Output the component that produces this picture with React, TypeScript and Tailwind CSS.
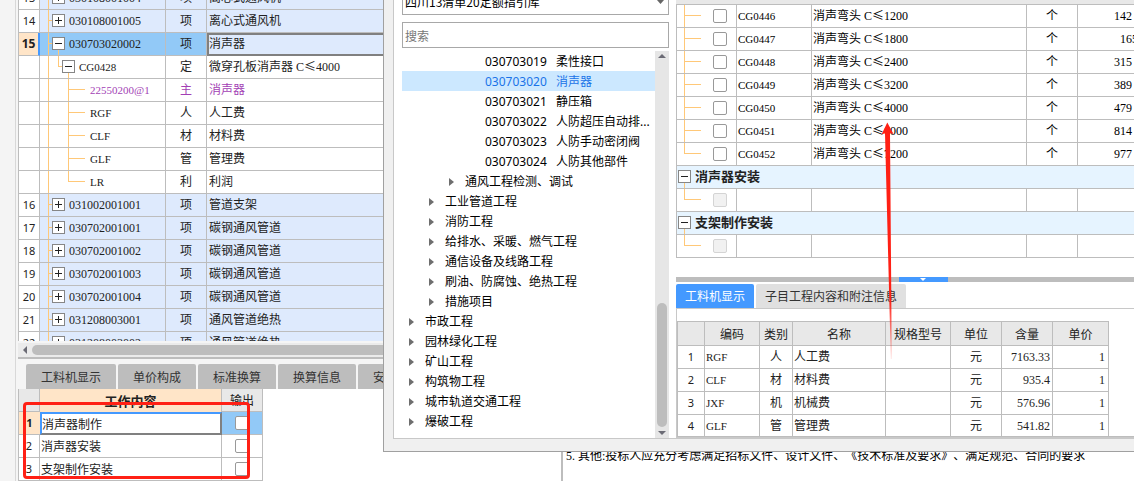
import React from "react";

/* Latin runs use a narrow serif so that digits take half the width of a Chinese character. */
function Txt({ children }: { children: string }) {
  const parts = children.split(/([\x20-\x7e]+)/).filter(Boolean);
  return (
    <>
      {parts.map((p, i) =>
        /^[\x20-\x7e]/.test(p) ? (
          <span
            key={i}
            className={
              /^[A-Z0-9@]*[A-Z@][A-Z0-9@]*$/.test(p) && p.length > 1
                ? "whitespace-pre font-['Liberation_Serif',serif] text-[11px]"
                : "whitespace-pre font-['Liberation_Serif',serif] text-[12px]"
            }
          >
            {p}
          </span>
        ) : (
          <span key={i}>{p}</span>
        )
      )}
    </>
  );
}

function Toggle({ open, stem, label }: { open: boolean; stem?: boolean; label: string }) {
  return (
    <button type="button" aria-label={label} aria-expanded={open} className="mt-1 block shrink-0">
      <svg width="13" height="18" className="block" shapeRendering="crispEdges">
        {stem && <path d="M6.5 13V18" stroke="#ffc878" />}
        <rect x="0.5" y="0.5" width="12" height="12" fill="#fff" stroke="#868686" />
        <path d={open ? "M3 6.5H10" : "M3 6.5H10M6.5 3V10"} stroke="#222" />
      </svg>
    </button>
  );
}

function Guide({ width, d }: { width: number; d: string }) {
  return (
    <svg width={width} height="22" className="block shrink-0" shapeRendering="crispEdges" aria-hidden="true">
      <path d={d} stroke="#ffc878" fill="none" />
    </svg>
  );
}

type Bill = { no: string; code: string; cat: string; name: string; level: number; open?: boolean; last?: boolean };

const bills: Bill[] = [
  { no: "13", code: "030108001004", cat: "项", name: "离心式通风机", level: 0 },
  { no: "14", code: "030108001005", cat: "项", name: "离心式通风机", level: 0 },
  { no: "15", code: "030703020002", cat: "项", name: "消声器", level: 0, open: true },
  { no: "", code: "CG0428", cat: "定", name: "微穿孔板消声器 C≤4000", level: 1, open: true },
  { no: "", code: "22550200@1", cat: "主", name: "消声器", level: 2 },
  { no: "", code: "RGF", cat: "人", name: "人工费", level: 2 },
  { no: "", code: "CLF", cat: "材", name: "材料费", level: 2 },
  { no: "", code: "GLF", cat: "管", name: "管理费", level: 2 },
  { no: "", code: "LR", cat: "利", name: "利润", level: 2, last: true },
  { no: "16", code: "031002001001", cat: "项", name: "管道支架", level: 0 },
  { no: "17", code: "030702001001", cat: "项", name: "碳钢通风管道", level: 0 },
  { no: "18", code: "030702001002", cat: "项", name: "碳钢通风管道", level: 0 },
  { no: "19", code: "030702001003", cat: "项", name: "碳钢通风管道", level: 0 },
  { no: "20", code: "030702001004", cat: "项", name: "碳钢通风管道", level: 0 },
  { no: "21", code: "031208003001", cat: "项", name: "通风管道绝热", level: 0 },
  { no: "22", code: "031208003002", cat: "项", name: "通风管道绝热", level: 0 },
];

function BillTable() {
  return (
    <table className="-mt-[13px] w-full table-fixed border-separate border-spacing-0 text-[#222]">
      <colgroup>
        <col className="w-[21px]" />
        <col className="w-[126px]" />
        <col className="w-[41px]" />
        <col />
      </colgroup>
      <tbody>
        {bills.map((b) => {
          const sel = b.no === "15";
          const bg = sel ? "bg-[#92c9f7]" : b.level === 0 ? "bg-[#deeafd]" : "bg-white";
          const color = b.code.includes("@") ? "text-[#a33fb5]" : "";
          const cell = `h-[23px] border-b border-r border-[#bdbdbd] p-0 ${bg} ${color}`;
          return (
            <tr key={b.code}>
              <th
                scope="row"
                className={
                  sel
                    ? "h-[23px] border-b border-r-2 border-b-[#bdbdbd] border-r-[#4499ff] bg-[#ffe5c8] p-0 font-['Noto_Sans',sans-serif] text-[12px] font-bold leading-[22px]"
                    : "h-[23px] border-b border-r border-[#bdbdbd] bg-white p-0 font-['Noto_Sans',sans-serif] text-[11px] font-normal leading-[22px]"
                }
              >
                {b.no}
              </th>
              <td className={cell}>
                <div className="flex h-[22px] items-start">
                  {b.level === 0 && <Guide width={12} d="M8.5 0V22M8 10.5H12" />}
                  {b.level === 1 && <Guide width={22} d="M8.5 0V22M18.5 0V10.5H22" />}
                  {b.level === 2 && (
                    <Guide width={50} d={b.last ? "M8.5 0V22M28.5 0V10.5H45" : "M8.5 0V22M28.5 0V22M28 10.5H45"} />
                  )}
                  {b.level < 2 && <Toggle open={!!b.open} stem={b.open} label={b.code} />}
                  <span className={b.level < 2 ? "pl-1 leading-5" : "leading-5"}>
                    <Txt>{b.code}</Txt>
                  </span>
                </div>
              </td>
              <td className={`${cell} text-center`}>
                <div className="h-[22px] leading-5">{b.cat}</div>
              </td>
              {sel ? (
                <td className="h-[23px] border-2 border-[#808080] bg-[#deeafd] p-0">
                  <div className="h-[19px] leading-4">{b.name}</div>
                </td>
              ) : (
                <td className={cell}>
                  <div className="h-[22px] pl-0.5 leading-5">
                    <Txt>{b.name}</Txt>
                  </div>
                </td>
              )}
            </tr>
          );
        })}
      </tbody>
    </table>
  );
}

const box =
  "block size-3.5 appearance-none rounded-[2px] border border-[#999] bg-white disabled:border-[#d4d4d4] disabled:bg-[#f1f1f1]";

const works = ["消声器制作", "消声器安装", "支架制作安装"];

function WorkTable() {
  return (
    <table className="w-[245px] table-fixed border-separate border-spacing-0 border-l border-[#bdbdbd] text-[#222]">
      <colgroup>
        <col className="w-[21px]" />
        <col className="w-[182px]" />
        <col />
      </colgroup>
      <thead>
        <tr>
          <td className="h-[23px] border-b border-r border-[#bdbdbd] bg-[#e8e8e8] p-0" />
          <th className="h-[23px] border-r border-[#bdbdbd] bg-[#ffe5c8] p-0 text-[13px] font-bold leading-5">
            工作内容
          </th>
          <th className="h-[23px] border-b border-r border-[#bdbdbd] bg-[#e8e8e8] p-0 font-normal leading-5">输出</th>
        </tr>
      </thead>
      <tbody>
        {works.map((w, i) => (
          <tr key={w}>
            <th
              scope="row"
              className={
                i === 0
                  ? "h-[23px] border-b border-[#bdbdbd] bg-[#ffe5c8] p-0 font-['Noto_Sans',sans-serif] text-[11px] font-bold"
                  : "h-[23px] border-b border-r border-[#bdbdbd] bg-white p-0 font-['Noto_Sans',sans-serif] text-[11px] font-normal"
              }
            >
              {i + 1}
            </th>
            <td
              className={
                i === 0
                  ? "h-[23px] border-2 border-b-[#808080] border-l-[#4499ff] border-r-[#808080] border-t-[#4499ff] bg-white p-0 leading-[18px]"
                  : "h-[23px] border-b border-r border-[#bdbdbd] bg-white p-0 pl-px leading-5"
              }
            >
              {w}
            </td>
            <td
              className={
                i === 0
                  ? "h-[23px] border-b border-r border-[#bdbdbd] bg-[#92c9f7] p-0"
                  : "h-[23px] border-b border-r border-[#bdbdbd] bg-white p-0"
              }
            >
              <input type="checkbox" aria-label={`输出 ${w}`} className={`${box} mx-auto`} />
            </td>
          </tr>
        ))}
      </tbody>
    </table>
  );
}

type Node = { text: string; code?: string; level: number };

const nodes: Node[] = [
  { code: "030703019", text: "柔性接口", level: 3 },
  { code: "030703020", text: "消声器", level: 3 },
  { code: "030703021", text: "静压箱", level: 3 },
  { code: "030703022", text: "人防超压自动排...", level: 3 },
  { code: "030703023", text: "人防手动密闭阀", level: 3 },
  { code: "030703024", text: "人防其他部件", level: 3 },
  { text: "通风工程检测、调试", level: 2 },
  { text: "工业管道工程", level: 1 },
  { text: "消防工程", level: 1 },
  { text: "给排水、采暖、燃气工程", level: 1 },
  { text: "通信设备及线路工程", level: 1 },
  { text: "刷油、防腐蚀、绝热工程", level: 1 },
  { text: "措施项目", level: 1 },
  { text: "市政工程", level: 0 },
  { text: "园林绿化工程", level: 0 },
  { text: "矿山工程", level: 0 },
  { text: "构筑物工程", level: 0 },
  { text: "城市轨道交通工程", level: 0 },
  { text: "爆破工程", level: 0 },
];

const indents = ["pl-[7px]", "pl-[27px]", "pl-[47px]", "pl-[83px]"];

function Catalog() {
  return (
    <div className="flex w-[283px] shrink-0 flex-col border-b border-l border-[#c8c8c8] bg-white pl-2 pr-[7px]">
      <div className="relative -mt-[11px] shrink-0">
        <select
          aria-label="指引库"
          className="block h-[26px] w-full appearance-none border border-[#a8a8a8] bg-white pl-0.5 text-black"
        >
          <option>四川13清单20定额指引库</option>
        </select>
        <svg width="7" height="4" className="absolute right-[5px] top-[11px]" aria-hidden="true">
          <path d="M0 0H7L3.5 4Z" fill="#666" />
        </svg>
      </div>
      <input
        type="text"
        aria-label="搜索"
        placeholder="搜索"
        className="mt-[7px] h-[26px] w-full shrink-0 border border-[#a8a8a8] bg-white pl-0.5 placeholder:text-[#777]"
      />
      <div className="mt-[3px] flex min-h-0 flex-1">
        <ul className="min-w-0 flex-1 overflow-hidden font-['Noto_Sans','Noto_Sans_CJK_SC',sans-serif] text-black">
          {nodes.map((n) => (
            <li key={n.text} className={n.code === "030703020" ? "bg-[#cce8ff] text-[#1a73e8]" : ""}>
              <button
                type="button"
                className={`flex h-5 w-full items-center whitespace-nowrap pt-0.5 text-left leading-[18px] ${indents[n.level]}`}
              >
                {n.code ? (
                  <span className="w-[71px] shrink-0">{n.code}</span>
                ) : (
                  <svg width="16" height="8" className="shrink-0" aria-hidden="true">
                    <path d="M0 0L5 4L0 8Z" fill="#6e6e6e" />
                  </svg>
                )}
                <span>{n.text}</span>
              </button>
            </li>
          ))}
        </ul>
        <div className="flex w-3.5 shrink-0 flex-col items-center bg-[#e6e6e6] pb-[3px] pt-[3px]">
          <svg width="8" height="4" aria-hidden="true">
            <path d="M0 4H8L4 0Z" fill="#6b6b75" />
          </svg>
          <div className="mb-1 mt-auto h-[124px] w-2.5 rounded-full bg-[#bdbdbd]" />
          <svg width="8" height="4" aria-hidden="true">
            <path d="M0 0H8L4 4Z" fill="#6b6b75" />
          </svg>
        </div>
      </div>
    </div>
  );
}

const quotas = [
  ["CG0446", "1200", "142"],
  ["CG0447", "1800", "165"],
  ["CG0448", "2400", "315"],
  ["CG0449", "3200", "389"],
  ["CG0450", "4000", "479"],
  ["CG0451", "6000", "814"],
  ["CG0452", "7200", "977"],
];

const line = "h-[23px] border-b border-r border-[#bdbdbd] p-0";

function QuotaTable() {
  return (
    <table className="w-full table-fixed border-separate border-spacing-0 border-l border-[#bdbdbd] bg-white text-black">
      <colgroup>
        <col className="w-[60px]" />
        <col className="w-[75px]" />
        <col className="w-[215px]" />
        <col className="w-[51px]" />
        <col />
      </colgroup>
      <tbody>
        {quotas.map(([code, size, price], i) => (
          <tr key={code}>
            <td className={line}>
              <div className="flex h-[22px] items-start">
                <Guide width={36} d={i === 6 ? "M7.5 0V10.5H24" : "M7.5 0V22M7 10.5H24"} />
                <input type="checkbox" aria-label={code} className={`${box} mt-1`} />
              </div>
            </td>
            <td className={`${line} pl-px`}>
              <div className="h-[22px] leading-5">
                <Txt>{code}</Txt>
              </div>
            </td>
            <td className={`${line} pl-px`}>
              <div className="h-[22px] leading-5">
                <Txt>{`消声弯头 C≤${size}`}</Txt>
              </div>
            </td>
            <td className={`${line} text-center`}>
              <div className="h-[22px] leading-5">个</div>
            </td>
            <td className="h-[23px] overflow-hidden whitespace-nowrap border-b border-[#bdbdbd] p-0">
              <div className={code === "CG0447" ? "h-[22px] pl-[42px] leading-5" : "h-[22px] pl-[36px] leading-5"}>
                <Txt>{price}</Txt>
              </div>
            </td>
          </tr>
        ))}
        {["消声器安装", "支架制作安装"].map((g) => (
          <React.Fragment key={g}>
            <tr>
              <td colSpan={5} className="h-[23px] border-b border-[#bdbdbd] bg-[#e6f4ff] p-0">
                <div className="flex h-[22px] items-start pl-px">
                  <Toggle open stem label={g} />
                  <span className="pl-1 text-[13px] font-bold leading-5 text-[#222]">{g}</span>
                </div>
              </td>
            </tr>
            <tr>
              <td className={line}>
                <div className="flex h-[22px] items-start">
                  <Guide width={36} d="M7.5 0V10.5H24" />
                  <input type="checkbox" disabled aria-label={`${g} 空行`} className={`${box} mt-1`} />
                </div>
              </td>
              <td className={line} />
              <td className={line} />
              <td className={line} />
              <td className="h-[23px] border-b border-[#bdbdbd] p-0" />
            </tr>
          </React.Fragment>
        ))}
      </tbody>
    </table>
  );
}

const resources = [
  ["RGF", "人", "人工费", "7163.33"],
  ["CLF", "材", "材料费", "935.4"],
  ["JXF", "机", "机械费", "576.96"],
  ["GLF", "管", "管理费", "541.82"],
];

function ResourceTable() {
  return (
    <table className="w-[432px] table-fixed border-separate border-spacing-0 border-l border-t border-[#bdbdbd] bg-white text-[#222]">
      <colgroup>
        <col className="w-[27px]" />
        <col className="w-[55px]" />
        <col className="w-[33px]" />
        <col className="w-[93px]" />
        <col className="w-[65px]" />
        <col className="w-[51px]" />
        <col className="w-[51px]" />
        <col />
      </colgroup>
      <thead>
        <tr>
          {["", "编码", "类别", "名称", "规格型号", "单位", "含量", "单价"].map((h) => (
            <th key={h} scope="col" className="h-6 border-b border-r border-[#bdbdbd] bg-[#e8e8e8] p-0 font-normal">
              {h}
            </th>
          ))}
        </tr>
      </thead>
      <tbody>
        {resources.map(([code, cat, name, qty], i) => (
          <tr key={code}>
            <th scope="row" className={`${line} font-['Noto_Sans',sans-serif] text-[11px] font-normal leading-[22px]`}>
              {i + 1}
            </th>
            <td className={`${line} pl-px`}>
              <div className="h-[22px] leading-5">
                <Txt>{code}</Txt>
              </div>
            </td>
            <td className={`${line} text-center`}>
              <div className="h-[22px] leading-5">{cat}</div>
            </td>
            <td className={`${line} pl-px`}>
              <div className="h-[22px] leading-5">{name}</div>
            </td>
            <td className={line} />
            <td className={`${line} text-center`}>
              <div className="h-[22px] leading-5">元</div>
            </td>
            <td className={`${line} pr-0.5 text-right`}>
              <div className="h-[22px] leading-5">
                <Txt>{qty}</Txt>
              </div>
            </td>
            <td className={`${line} pr-[3px] text-right`}>
              <div className="h-[22px] leading-5">
                <Txt>1</Txt>
              </div>
            </td>
          </tr>
        ))}
      </tbody>
    </table>
  );
}

function GuideDialog() {
  return (
    <div
      role="dialog"
      aria-label="指引库"
      className="absolute bottom-[29px] left-[383px] right-0 top-0 flex overflow-hidden border-b border-l border-[#a0a0a0] bg-[#f0f0f0] pb-3 pl-[9px]"
    >
      <Catalog />
      <div className="flex min-w-0 flex-1 flex-col border-b-2 border-[#c8c8c8] bg-white">
        <div className="h-[5px] shrink-0 border-b border-[#bdbdbd] bg-[#e8e8e8]" />
        <div className="min-h-0 flex-1 overflow-hidden">
          <QuotaTable />
        </div>
        <div className="flex h-[5px] shrink-0 justify-center bg-[#bdbdbd] pl-9">
          <button type="button" aria-label="折叠" className="flex w-[49px] justify-center bg-[#4499ff]">
            <svg width="6" height="4" aria-hidden="true">
              <path d="M0 1H6L3 4Z" fill="#fff" />
            </svg>
          </button>
        </div>
        <div className="mt-0.5 flex shrink-0 gap-0.5 border-b border-[#c8c8c8]">
          <button type="button" className="h-6 w-[78px] rounded-t-[2px] bg-[#4499ff] text-white">
            工料机显示
          </button>
          <button type="button" className="h-6 w-[150px] rounded-t-[2px] bg-[#e0e0e0] text-[#333]">
            子目工程内容和附注信息
          </button>
        </div>
        <div className="h-[128px] shrink-0 overflow-hidden border-l border-[#c8c8c8] pt-3">
          <div className="h-[116px] overflow-hidden border-b border-[#bdbdbd]">
            <ResourceTable />
          </div>
        </div>
      </div>
    </div>
  );
}

export default function App() {
  return (
    <div className="relative flex h-screen min-h-[420px] overflow-hidden bg-[#f5f5f5] font-['Noto_Sans_CJK_SC',sans-serif] text-[12px] [text-spacing-trim:space-all]">
      <div className="w-4 shrink-0 border-r border-[#d8d8d8] bg-[#f4f4f4]" />
      <div className="flex min-w-0 flex-1 flex-col pl-0.5">
        <div className="min-h-0 flex-1 overflow-hidden border-l border-[#bdbdbd] bg-white">
          <BillTable />
        </div>
        <div className="mt-0.5 flex h-4 shrink-0 items-start border-b-2 border-[#bdbdbd] bg-[#ebebeb]">
          <svg width="14" height="14" className="shrink-0" aria-hidden="true">
            <path d="M9 3V11L5 7Z" fill="#6b6b75" />
          </svg>
          <div className="mt-0.5 h-2.5 flex-1 rounded-l-full bg-[#bdbdbd]" />
        </div>
        <div className="flex h-[122px] shrink-0">
          <div className="flex w-[543px] shrink-0 flex-col">
            <div className="mt-[5px] flex shrink-0 gap-0.5 pl-2">
              <button type="button" className="h-[25px] w-[90px] rounded-t-[2px] bg-[#bdbdbd] text-[#333]">
                工料机显示
              </button>
              {["单价构成", "标准换算", "换算信息", "安装费用"].map((t) => (
                <button key={t} type="button" className="h-[25px] w-[78px] rounded-t-[2px] bg-[#bdbdbd] text-[#333]">
                  {t}
                </button>
              ))}
            </div>
            <div className="relative min-h-0 flex-1 bg-white">
              <div className="h-full overflow-hidden">
                <WorkTable />
              </div>
              <div className="pointer-events-none absolute left-[5px] top-[13px] h-[77px] w-[227px] rounded-[4px] border-[3px] border-[#ff2015]" />
            </div>
          </div>
          <div className="flex min-w-0 flex-1 items-end overflow-hidden border-l-2 border-[#bdbdbd] bg-white pb-[15px] pl-[3px] text-black">
            <p className="whitespace-nowrap leading-5">
              <Txt>5. 其他:投标人应充分考虑满足招标文件、设计文件、《技术标准及要求》、满足规范、合同的要求</Txt>
            </p>
          </div>
        </div>
      </div>
      <GuideDialog />
      <svg
        width="14"
        height="240"
        className="pointer-events-none absolute left-[881px] top-[121px]"
        aria-hidden="true"
      >
        <defs>
          <linearGradient id="fade" x1="0" y1="0" x2="0" y2="1">
            <stop offset="0.75" stopColor="#ff2015" />
            <stop offset="1" stopColor="#ff2015" stopOpacity="0.1" />
          </linearGradient>
        </defs>
        <path d="M6.3 1.5L12.5 13L9 12.3L10.8 238H9.8L4 12.3L0.5 13.5Z" fill="url(#fade)" />
      </svg>
    </div>
  );
}
